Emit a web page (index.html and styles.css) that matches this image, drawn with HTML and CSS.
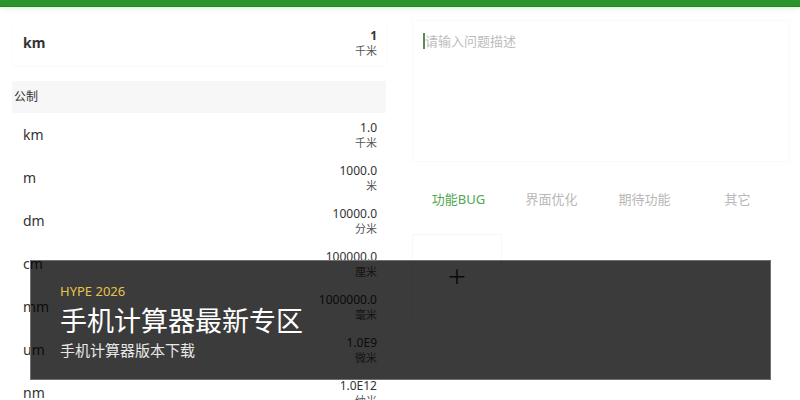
FILE: index.html
```html
<!DOCTYPE html>
<html lang="zh-CN">

<head>
    <meta charset="UTF-8" />
    <meta name="viewport" content="width=device-width, initial-scale=1.0" />
    <title>手机计算器</title>
    <link rel="stylesheet" href="styles.css">
</head>

<body>
    <div class="top-bar"></div>
    <div class="main">
        <div class="units">
            <div class="head-card">
                <span class="unit-name bold">km</span>
                <div class="unit-value">
                    <span class="num bold">1</span>
                    <span class="cn">千米</span>
                </div>
            </div>
            <div class="group-title">公制</div>
            <div class="unit-row">
                <span class="unit-name">km</span>
                <div class="unit-value"><span class="num">1.0</span><span class="cn">千米</span></div>
            </div>
            <div class="unit-row">
                <span class="unit-name">m</span>
                <div class="unit-value"><span class="num">1000.0</span><span class="cn">米</span></div>
            </div>
            <div class="unit-row">
                <span class="unit-name">dm</span>
                <div class="unit-value"><span class="num">10000.0</span><span class="cn">分米</span></div>
            </div>
            <div class="unit-row">
                <span class="unit-name">cm</span>
                <div class="unit-value"><span class="num">100000.0</span><span class="cn">厘米</span></div>
            </div>
            <div class="unit-row">
                <span class="unit-name">mm</span>
                <div class="unit-value"><span class="num">1000000.0</span><span class="cn">毫米</span></div>
            </div>
            <div class="unit-row">
                <span class="unit-name">um</span>
                <div class="unit-value"><span class="num">1.0E9</span><span class="cn">微米</span></div>
            </div>
            <div class="unit-row">
                <span class="unit-name">nm</span>
                <div class="unit-value"><span class="num">1.0E12</span><span class="cn">纳米</span></div>
            </div>
        </div>

        <div class="feedback">
            <div class="desc-box">
                <span class="cursor"></span>
                <span class="placeholder">请输入问题描述</span>
            </div>
            <div class="tabs">
                <span class="tab active">功能BUG</span>
                <span class="tab">界面优化</span>
                <span class="tab">期待功能</span>
                <span class="tab">其它</span>
            </div>
            <div class="add-box">+</div>
        </div>
    </div>

    <div class="promo">
        <div class="promo-tag">HYPE 2026</div>
        <div class="promo-title">手机计算器最新专区</div>
        <div class="promo-sub">手机计算器版本下载</div>
    </div>
</body>

</html>
```

FILE: styles.css
```css
body,
html {
    margin: 0;
    padding: 0;
    font-family: 'Noto Sans', 'Noto Sans CJK SC', sans-serif;
    background: #fff;
    color: #333;
    height: 400px;
    overflow: hidden;
}

.top-bar {
    height: 6px;
    background: #2b952b;
    border-bottom: 1px solid #238423;
    box-shadow: 0 2px 4px rgba(120, 220, 120, 0.25);
}

.main {
    display: flex;
    padding-top: 13px;
}

.units {
    width: 374px;
    margin-left: 12px;
    flex-shrink: 0;
}

.head-card {
    height: 45px;
    display: flex;
    align-items: center;
    justify-content: space-between;
    padding: 0 9px 0 11px;
    background: #fff;
    box-shadow: 0 1px 3px rgba(0, 0, 0, 0.03);
}

.bold {
    font-weight: bold;
}

.unit-name {
    font-size: 14px;
    color: #333;
}

.unit-value {
    display: flex;
    flex-direction: column;
    align-items: flex-end;
    line-height: 15px;
}

.num {
    font-size: 12px;
    color: #333;
}

.cn {
    font-size: 11px;
    color: #555;
}

.group-title {
    margin-top: 16px;
    height: 32px;
    line-height: 32px;
    padding-left: 2px;
    font-size: 12px;
    background: #f7f7f7;
    color: #333;
}

.unit-row {
    height: 43px;
    display: flex;
    align-items: center;
    justify-content: space-between;
    padding: 0 9px 0 11px;
}

.feedback {
    margin-left: 26px;
    width: 378px;
}

.desc-box {
    height: 142px;
    border: 1px solid #fafafa;
    padding: 11px 10px 0 10px;
    box-sizing: border-box;
    display: flex;
    align-items: flex-start;
}

.cursor {
    width: 2px;
    height: 16px;
    margin-top: 1px;
    background: #5a8a5a;
}

.placeholder {
    font-size: 13px;
    color: #bdbdbd;
    line-height: 18px;
}

.tabs {
    display: flex;
    margin-top: 22px;
    height: 28px;
    align-items: center;
}

.tab {
    width: 93px;
    text-align: center;
    font-size: 13px;
    color: #b8b8b8;
}

.tab.active {
    color: #4fa84f;
}

.add-box {
    margin-top: 22px;
    width: 90px;
    height: 88px;
    border: 1px solid #f7f7f7;
    box-sizing: border-box;
    text-align: center;
    font-size: 32px;
    font-weight: 300;
    line-height: 82px;
    color: #333;
}

.promo {
    position: absolute;
    left: 30px;
    top: 260px;
    width: 741px;
    height: 120px;
    box-sizing: border-box;
    background: rgba(0, 0, 0, 0.77);
    border: 1px solid #707070;
    padding: 21px 29px;
    color: #fff;
}

.promo-tag {
    font-size: 13px;
    color: #e8c34a;
    line-height: 18px;
}

.promo-title {
    font-size: 27px;
    line-height: 36px;
    margin-top: 3px;
}

.promo-sub {
    font-size: 15px;
    line-height: 22px;
    color: #e8e8e8;
}
```
